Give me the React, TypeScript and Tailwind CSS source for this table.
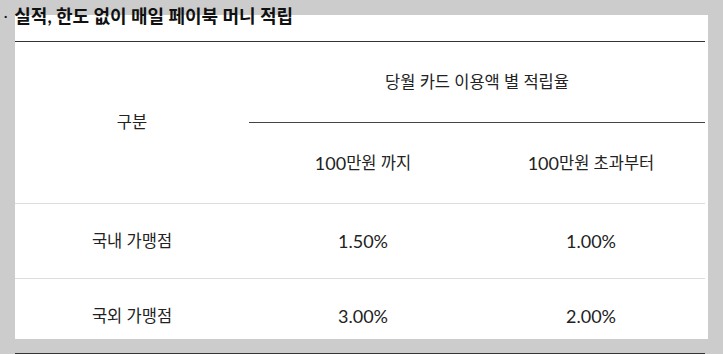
import type { ReactNode } from "react";

// Latin digits are set a touch larger than the Hangul around them
const Num = ({ children }: { children: ReactNode }) => (
  <span className="text-[18px]">{children}</span>
);

const rows = [
  { label: "국내 가맹점", under: "1.50%", over: "1.00%" },
  { label: "국외 가맹점", under: "3.00%", over: "2.00%" },
];

const font = "font-['Lato','Noto_Sans_CJK_KR',sans-serif]";

export default function App() {
  return (
    <div className={`min-h-[354px] bg-[#cccccc] pl-[15px] pt-[15px] ${font}`}>
      <div className="flow-root h-[324px] w-[693px] bg-white">
        {/* Section title */}
        <h3 className="-ml-[11px] -mt-[12px] flex h-[26px] items-center text-[18px] font-bold leading-[26px] text-[#111]">
          <span className="mr-[7px] text-[12px]">·</span>
          실적, 한도 없이 매일 페이북 머니 적립
        </h3>

        {/* Rate table */}
        <div className="mt-[12px] w-[690px] border-t border-[#333] text-[16.5px] text-[#222]">
          <div className="flex h-[162px] border-b border-[#dddddd]">
            <div className="flex w-[234px] items-center justify-center">구분</div>
            <div className="flex flex-1 flex-col">
              <div className="flex h-[80px] items-center justify-center">당월 카드 이용액 별 적립율</div>
              <div className="flex h-[81px] border-t border-[#444]">
                <div className="flex w-[228px] items-center justify-center">
                  <Num>100</Num>만원 까지
                </div>
                <div className="flex w-[228px] items-center justify-center">
                  <Num>100</Num>만원 초과부터
                </div>
              </div>
            </div>
          </div>
          {rows.map((r, i) => (
            <div
              key={r.label}
              className={`flex h-[75px] border-b ${i === rows.length - 1 ? "border-[#333]" : "border-[#dddddd]"}`}
            >
              <div className="flex w-[234px] items-center justify-center">{r.label}</div>
              <div className="flex w-[228px] items-center justify-center">
                <Num>{r.under}</Num>
              </div>
              <div className="flex w-[228px] items-center justify-center">
                <Num>{r.over}</Num>
              </div>
            </div>
          ))}
        </div>
      </div>
    </div>
  );
}
